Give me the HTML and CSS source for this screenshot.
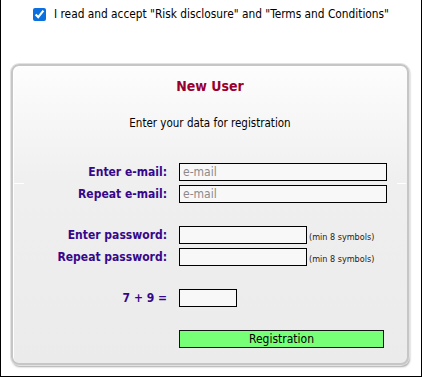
FILE: index.html
```html
<!DOCTYPE html>
<html>
<head>
<meta charset="utf-8">
<link rel="stylesheet" href="styles.css">
</head>
<body>
<div class="frame">
  <label class="accept"><input type="checkbox" class="check" checked><span>I read and accept "Risk disclosure" and "Terms and Conditions"</span></label>
  <div class="card">
    <h2 class="title">New User</h2>
    <p class="intro">Enter your data for registration</p>
    <div class="form">
      <div class="group">
        <div class="row"><span class="lbl">Enter e-mail:</span><input class="field wide" type="text" placeholder="e-mail"></div>
        <div class="sep"></div>
        <div class="row"><span class="lbl">Repeat e-mail:</span><input class="field wide" type="text" placeholder="e-mail"></div>
      </div>
      <div class="group">
        <div class="row"><span class="lbl">Enter password:</span><input class="field mid" type="password"><span class="hint">(min 8 symbols)</span></div>
        <div class="row"><span class="lbl">Repeat password:</span><input class="field mid" type="password"><span class="hint">(min 8 symbols)</span></div>
      </div>
      <div class="group">
        <div class="row"><span class="lbl">7 + 9 =</span><input class="field small" type="text"></div>
      </div>
      <div class="group">
        <div class="row"><span class="lbl"></span><button class="btn" type="button">Registration</button></div>
      </div>
    </div>
  </div>
</div>
</body>
</html>
```

FILE: styles.css
```css
html, body {
  margin: 0;
  padding: 0;
  background: #fff;
}
body {
  font-family: "DejaVu Sans Condensed", "DejaVu Sans", sans-serif;
  font-stretch: condensed;
  color: #000;
}
.frame {
  box-sizing: border-box;
  width: 422px;
  height: 377px;
  border-left: 1px solid #000;
  border-right: 1px solid #000;
  border-bottom: 1px solid #000;
  overflow: hidden;
}
.accept {
  display: flex;
  justify-content: center;
  align-items: center;
  gap: 8px;
  height: 20px;
  padding-top: 4px;
  font-size: 11.8px;
  color: #000;
}
.check {
  margin: 0;
  width: 13px;
  height: 13px;
  accent-color: #0b6fe0;
}
.card {
  box-sizing: border-box;
  margin: 40px 12px 0 10px;
  height: 301px;
  border: 2px solid #c6c6c6;
  border-radius: 8px;
  background: linear-gradient(#fdfdfd 0, #efefef 40%, #ebebeb 100%);
  box-shadow: 0 0 0 1px #e2e2e2, 1px 2px 2px rgba(0,0,0,0.35), inset 1px 1px 0 #fff;
}
.title {
  margin: 11px 0 0;
  text-align: center;
  font-size: 14px;
  line-height: 18px;
  font-weight: bold;
  color: #99002e;
}
.intro {
  margin: 20px 0 0;
  text-align: center;
  font-size: 11.5px;
  line-height: 16px;
}
.form {
  display: flex;
  flex-direction: column;
  gap: 23px;
  margin-top: 32px;
}
.group {
  display: flex;
  flex-direction: column;
  gap: 4px;
}
.group .sep {
  height: 1px;
  margin: -2px 0 -3px;
  background: linear-gradient(to right, transparent 0, transparent 1px, #fff 1px, #fff 11px, transparent 11px, transparent calc(100% - 10px), #fff calc(100% - 10px), #fff calc(100% - 1px), transparent calc(100% - 1px));
}
.row {
  display: flex;
  align-items: center;
  height: 18px;
}
.lbl {
  width: 154px;
  margin-right: 12px;
  text-align: right;
  font-size: 12px;
  font-weight: bold;
  color: #36078a;
  white-space: nowrap;
}
.field {
  box-sizing: border-box;
  height: 18px;
  margin: 0;
  padding: 0 3px;
  border: 1px solid #000;
  background: #f8f8f8;
  font-family: inherit;
  font-size: 12px;
  outline: none;
}
.field::placeholder {
  color: #8a8a8a;
}
.wide { width: 208px; }
.mid { width: 128px; }
.small { width: 58px; }
.hint {
  margin-left: 2px;
  margin-top: 4px;
  font-size: 9px;
  color: #2a1a10;
  white-space: nowrap;
}
.btn {
  box-sizing: border-box;
  width: 205px;
  height: 18px;
  margin: 0;
  padding: 0;
  border: 1px solid #111;
  background: #77ff77;
  font-family: inherit;
  font-size: 12px;
  color: #000;
  line-height: 16px;
}
```
